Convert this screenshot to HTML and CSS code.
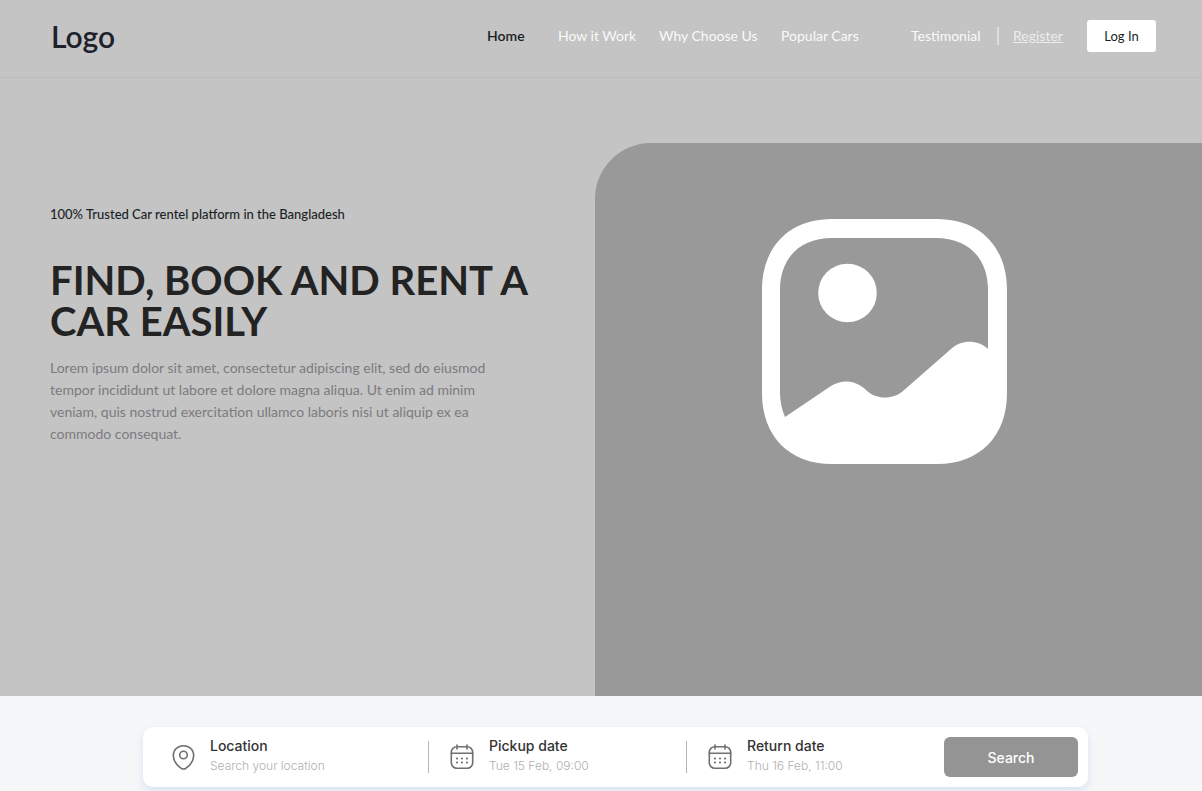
FILE: index.html
```html
<!DOCTYPE html>
<html lang="en">
<head>
<meta charset="utf-8">
<meta name="viewport" content="width=device-width, initial-scale=1">
<title>Car rental</title>
<link rel="stylesheet" href="styles.css">
</head>
<body>
<header class="header">
  <a class="logo" href="#">Logo</a>
  <nav class="nav">
    <a class="nav-link current" href="#">Home</a>
    <a class="nav-link" href="#">How it Work</a>
    <a class="nav-link" href="#">Why Choose Us</a>
    <a class="nav-link" href="#">Popular Cars</a>
    <a class="nav-link" href="#">Testimonial</a>
    <span class="nav-divider"></span>
    <a class="nav-link register" href="#">Register</a>
    <button class="login" type="button">Log In</button>
  </nav>
</header>
<main>
  <section class="hero">
    <div class="intro">
      <p class="tagline">100% Trusted Car rentel platform in the Bangladesh</p>
      <h1 class="title">FIND, BOOK AND RENT A<br>CAR EASILY</h1>
      <p class="lead">Lorem ipsum dolor sit amet, consectetur adipiscing elit, sed do eiusmod<br>tempor incididunt ut labore et dolore magna aliqua. Ut enim ad minim<br>veniam, quis nostrud exercitation ullamco laboris nisi ut aliquip ex ea<br>commodo consequat.</p>
    </div>
    <div class="media">
      <svg class="media-icon" viewBox="0 0 245 245" fill="#fff" aria-hidden="true">
        <path fill-rule="evenodd" d="M70 0H175C218 0 245 28 245 71V174C245 217 218 245 175 245H70C27 245 0 217 0 174V71C0 28 27 0 70 0ZM70 19C38 19 18 39 18 71V174C18 183 20 191 23 198L69 167C80 160 93 161 103 170C113 181 131 181 141 172L189 130C200 120 216 121 226 130V71C226 39 206 19 174 19Z"/>
        <circle cx="85.500" cy="74" r="29.300"/>
      </svg>
    </div>
  </section>
  <section class="booking">
    <form class="search-card">
      <div class="field">
        <svg class="field-icon" viewBox="0 0 24 28" aria-hidden="true">
          <path d="M12.500 2.700C6.500 2.700 2.300 7 2.300 12.500C2.300 17.500 5.500 22 10 25.200Q12.500 26.700 15 25.200C19.500 22 22.700 17.500 22.700 12.500C22.700 7 18.500 2.700 12.500 2.700Z"/>
          <circle cx="12.500" cy="12" r="3.800"/>
        </svg>
        <div class="field-text">
          <label class="field-label" for="location">Location</label>
          <input class="field-input" id="location" type="text" placeholder="Search your location">
        </div>
      </div>
      <div class="field">
        <svg class="field-icon" viewBox="0 0 24 28" aria-hidden="true">
          <rect x="1.300" y="3.800" width="21.400" height="21.400" rx="5.500"/>
          <path d="M1.300 10.300H22.700M7 2V6M17 2V6"/>
          <path class="dots" d="M7 15.500h0M12 15.500h0M17 15.500h0M7 19.500h0M12 19.500h0M17 19.500h0"/>
        </svg>
        <div class="field-text">
          <label class="field-label" for="pickup">Pickup date</label>
          <input class="field-input" id="pickup" type="text" placeholder="Tue 15 Feb, 09:00">
        </div>
      </div>
      <div class="field">
        <svg class="field-icon" viewBox="0 0 24 28" aria-hidden="true">
          <rect x="1.300" y="3.800" width="21.400" height="21.400" rx="5.500"/>
          <path d="M1.300 10.300H22.700M7 2V6M17 2V6"/>
          <path class="dots" d="M7 15.500h0M12 15.500h0M17 15.500h0M7 19.500h0M12 19.500h0M17 19.500h0"/>
        </svg>
        <div class="field-text">
          <label class="field-label" for="return">Return date</label>
          <input class="field-input" id="return" type="text" placeholder="Thu 16 Feb, 11:00">
        </div>
      </div>
      <button class="search-button" type="button">Search</button>
    </form>
  </section>
</main>
</body>
</html>
```
FILE: styles.css
```css
* { box-sizing: border-box; }

body {
  margin: 0;
  background: #f6f7f9;
  color: #1b1f27;
  font-family: Lato, "Liberation Sans", sans-serif;
  font-size: 14px;
}

a { color: inherit; text-decoration: none; }

button, input { font: inherit; }

.header {
  display: flex;
  align-items: center;
  justify-content: space-between;
  padding: 16px 46px 21px 51px;
  min-height: 78px;
  background: #c4c4c4;
  border-bottom: 1px solid #bababa;
}

.logo {
  color: #1c222b;
  font-size: 30px;
  font-weight: 600;
  line-height: 40px;
}

.nav {
  display: grid;
  grid-template-columns: 71px 101px 122px 130px 86px 16px 74px 69px;
  align-items: center;
  line-height: 20px;
}

.nav-link { color: #fafafa; white-space: nowrap; }

.current { color: #1b1f27; font-weight: 600; }

.nav-divider { width: 2px; height: 18px; background: #dedede; }

.register { color: #ededed; text-decoration: underline; }

.login {
  height: 32px;
  padding: 0;
  border: 0;
  border-radius: 3px;
  background: #fff;
  color: #1b1f27;
  font-size: 13px;
}

.hero {
  display: grid;
  grid-template-columns: 595fr 607fr;
  min-height: 618px;
  padding-top: 65px;
  background: #c4c4c4;
}

.intro { padding: 61px 20px 40px 50px; }

.tagline {
  margin: 0 0 36px;
  font-size: 13px;
  font-weight: 500;
  line-height: 20px;
}

.title {
  margin: 0 0 15px;
  color: #232323;
  font-size: 40px;
  font-weight: 700;
  line-height: 41px;
  white-space: nowrap;
}

.lead {
  margin: 0;
  color: #7b7b7e;
  line-height: 22px;
}

.media {
  padding: 76px 0 40px 167px;
  border-top-left-radius: 56px;
  background: #999;
}

.media-icon { display: block; width: 245px; max-width: 90%; }

.booking { padding: 31px 114px 4px 143px; }

.search-card {
  display: grid;
  grid-template-columns: 275fr 258fr 258fr 134px;
  align-items: center;
  padding: 10px;
  border-radius: 10px;
  background: #fff;
  box-shadow: 0 4px 10px #d9e2f0;
}

.field {
  display: flex;
  align-items: center;
  gap: 15px;
  height: 32px;
  padding-left: 21px;
  font-family: Inter, sans-serif;
}

.field:first-child { padding-left: 18px; }

.field + .field { border-left: 1px solid #b5b5b5; }

.field-icon {
  flex: none;
  width: 24px;
  height: 28px;
  fill: none;
  stroke: #707070;
  stroke-width: 1.6;
  stroke-linecap: round;
}

.dots { stroke-width: 2.2; }

.field-text {
  display: flex;
  flex: 1;
  flex-direction: column;
  min-width: 0;
  padding-bottom: 4px;
}

.field-label {
  color: #333;
  font-size: 14px;
  font-weight: 500;
  line-height: 20px;
}

.field-input {
  width: 100%;
  height: 18px;
  padding: 0;
  border: 0;
  background: none;
  color: #666;
  font-size: 12px;
  font-weight: 300;
}

.field-input::placeholder { color: #b0b0b0; opacity: 1; }

.search-button {
  height: 40px;
  border: 0;
  border-radius: 6px;
  background: #949494;
  color: #fff;
  font-family: Inter, sans-serif;
  font-size: 14px;
  font-weight: 500;
}
```
